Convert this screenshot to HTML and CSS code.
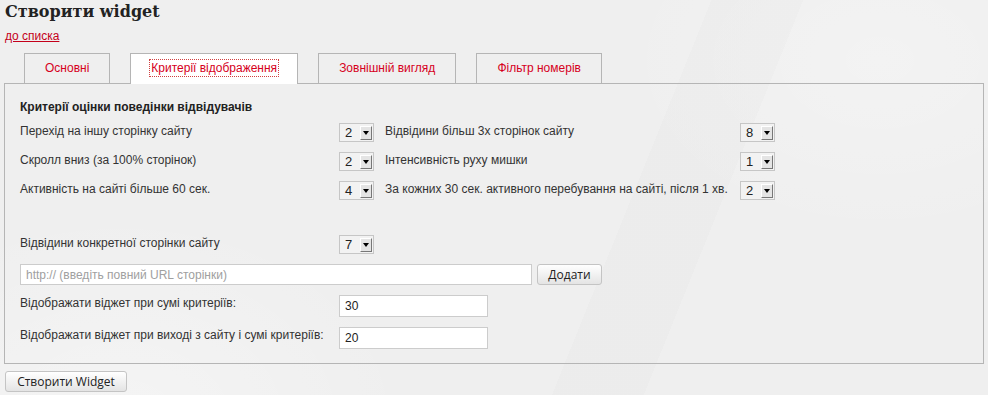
FILE: index.html
```html
<!DOCTYPE html>
<html>
<head>
  <meta charset="utf-8">
  <link rel="stylesheet" href="styles.css">
</head>
<body>
  <h1 class="title">Створити widget</h1>
  <a class="back-link" href="#">до списка</a>

  <div class="tabs">
    <a class="tab" href="#">Основні</a>
    <a class="tab active" href="#"><span class="focus">Критерії відображення</span></a>
    <a class="tab" href="#">Зовнішній вигляд</a>
    <a class="tab" href="#">Фільтр номерів</a>
  </div>

  <div class="panel">
    <div class="section-title">Критерії оцінки поведінки відвідувачів</div>

    <div class="criteria">
      <div class="label">Перехід на іншу сторінку сайту</div>
      <div class="select"><span class="value">2</span><span class="arrow"></span></div>
      <div class="label">Відвідини більш 3х сторінок сайту</div>
      <div class="select"><span class="value">8</span><span class="arrow"></span></div>

      <div class="label">Скролл вниз (за 100% сторінок)</div>
      <div class="select"><span class="value">2</span><span class="arrow"></span></div>
      <div class="label">Інтенсивність руху мишки</div>
      <div class="select"><span class="value">1</span><span class="arrow"></span></div>

      <div class="label">Активність на сайті більше 60 сек.</div>
      <div class="select"><span class="value">4</span><span class="arrow"></span></div>
      <div class="label">За кожних 30 сек. активного перебування на сайті, після 1 хв.</div>
      <div class="select"><span class="value">2</span><span class="arrow"></span></div>
    </div>

    <div class="page-row">
      <div class="label">Відвідини конкретної сторінки сайту</div>
      <div class="select"><span class="value">7</span><span class="arrow"></span></div>
    </div>

    <div class="url-row">
      <input type="text" class="url-input" placeholder="http:// (введіть повний URL сторінки)">
      <button class="btn add-btn">Додати</button>
    </div>

    <div class="field-row">
      <label class="field-label">Відображати віджет при сумі критеріїв:</label>
      <input type="text" class="num-input" value="30">
    </div>
    <div class="field-row">
      <label class="field-label">Відображати віджет при виході з сайту і сумі критеріїв:</label>
      <input type="text" class="num-input" value="20">
    </div>
  </div>

  <button class="btn submit-btn">Створити Widget</button>
</body>
</html>
```

FILE: styles.css
```css
body {
  margin: 0;
  padding: 0 4px;
  font-family: "Liberation Sans", Arial, sans-serif;
  font-size: 12px;
  color: #333;
  background-color: #efefef;
  background-image:
    radial-gradient(ellipse 420px 300px at 120px 420px, rgba(255,255,255,0.35), rgba(255,255,255,0) 70%),
    linear-gradient(112deg, rgba(0,0,0,0) 62%, rgba(0,0,0,0.012) 62%, rgba(0,0,0,0.012) 70%, rgba(0,0,0,0) 70%),
    radial-gradient(ellipse 380px 260px at 880px 60px, rgba(255,255,255,0.25), rgba(255,255,255,0) 70%);
  height: 395px;
  box-sizing: border-box;
}

.title {
  margin: 0;
  padding: 2px 0 0 1px;
  font-family: "DejaVu Serif", serif;
  font-size: 16px;
  line-height: 20px;
  font-weight: bold;
  color: #222;
}

.back-link {
  display: inline-block;
  margin: 7px 0 0 1px;
  line-height: 14px;
  color: #c4001a;
  text-decoration: underline;
}

.tabs {
  display: flex;
  gap: 20px;
  padding-left: 20px;
  margin-top: 10px;
  height: 30px;
}

.tab {
  display: block;
  height: 29px;
  line-height: 29px;
  padding: 0 20px;
  border: 1px solid #b5b5b5;
  border-bottom: none;
  color: #d6001c;
  text-decoration: none;
}

.tab.active {
  background: #fff;
  height: 30px;
  position: relative;
  z-index: 1;
}

.focus {
  outline: 1px dotted #d04040;
  outline-offset: 1px;
}

.panel {
  border: 1px solid #b5b5b5;
  padding: 15px 15px 14px;
}

.section-title {
  font-weight: bold;
  color: #222;
  line-height: 14px;
  margin-top: 1px;
}

.criteria {
  display: grid;
  grid-template-columns: 319px 46px 355px auto;
  row-gap: 10px;
  align-items: start;
  margin-top: 9px;
}

.label {
  line-height: 14px;
  padding-top: 1px;
  white-space: nowrap;
}

.select {
  display: flex;
  align-items: center;
  justify-content: space-between;
  width: 35px;
  height: 19px;
  box-sizing: border-box;
  border: 1px solid #c6c6c6;
  background: #f2f2f2;
  padding: 0 1px 0 5px;
}

.select .value {
  font-size: 13px;
  color: #222;
}

.select .arrow {
  width: 12px;
  height: 14px;
  box-sizing: border-box;
  background: #e4e4e4;
  border-top: 1px solid #fff;
  border-left: 1px solid #fff;
  border-right: 1px solid #777;
  border-bottom: 1px solid #777;
  display: flex;
  align-items: center;
  justify-content: center;
}

.select .arrow::after {
  content: "";
  border-left: 3px solid transparent;
  border-right: 3px solid transparent;
  border-top: 4px solid #000;
}

.page-row {
  display: grid;
  grid-template-columns: 319px auto;
  align-items: start;
  margin-top: 35px;
}

.url-row {
  display: flex;
  gap: 5px;
  margin-top: 10px;
}

.url-input {
  width: 512px;
  height: 21px;
  box-sizing: border-box;
  border: 1px solid #ccc;
  background: #fff;
  padding: 0 5px;
  font-family: "Liberation Sans", Arial, sans-serif;
  font-size: 12px;
  color: #333;
}

.url-input::placeholder {
  color: #a0a0a0;
}

.btn {
  height: 21px;
  box-sizing: border-box;
  border: 1px solid #c4c4c4;
  border-radius: 3px;
  background: linear-gradient(#ffffff, #e4e4e4);
  font-family: "Open Sans", sans-serif;
  font-size: 12px;
  color: #222;
  padding: 0 10px;
  line-height: 18px;
}

.add-btn {
  width: 65px;
}

.field-row {
  display: flex;
  align-items: flex-start;
  margin-top: 10px;
}

.field-label {
  width: 319px;
  line-height: 14px;
  padding-top: 1px;
  white-space: nowrap;
}

.num-input {
  width: 149px;
  height: 22px;
  box-sizing: border-box;
  border: 1px solid #ccc;
  background: #fff;
  padding: 0 5px;
  font-family: "Liberation Sans", Arial, sans-serif;
  font-size: 12px;
  color: #222;
}

.submit-btn {
  display: block;
  margin: 7px 0 0 1px;
  width: 122px;
}
```
